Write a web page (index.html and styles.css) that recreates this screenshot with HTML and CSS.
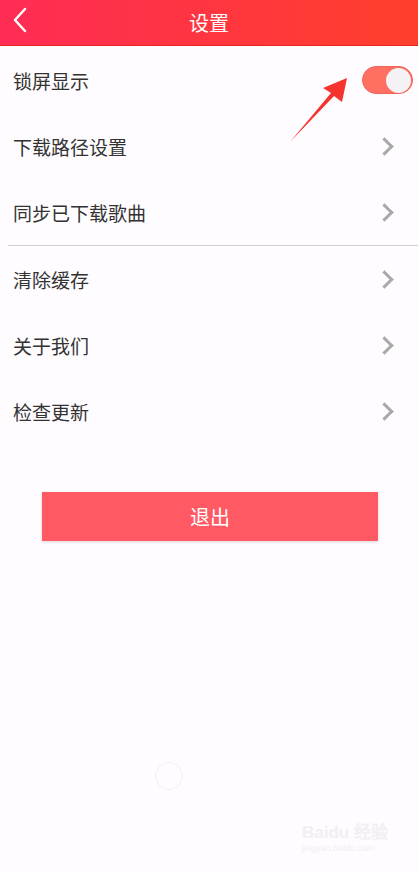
FILE: index.html
```html
<!DOCTYPE html>
<html lang="zh-CN">
<head>
    <meta charset="UTF-8">
    <meta name="viewport" content="width=device-width, initial-scale=1.0">
    <title>设置</title>
    <link rel="stylesheet" href="styles.css">
</head>
<body>
    <header class="topbar">
        <svg class="back" width="16" height="26" viewBox="0 0 16 26">
            <path d="M13 2 L3 13 L13 24" fill="none" stroke="#fff" stroke-width="2.4" stroke-linecap="round" stroke-linejoin="round"/>
        </svg>
        <h1>设置</h1>
    </header>

    <ul class="menu">
        <li class="row">
            <span>锁屏显示</span>
            <span class="switch"><span class="knob"></span></span>
        </li>
        <li class="row"><span>下载路径设置</span><i class="chev"></i></li>
        <li class="row"><span>同步已下载歌曲</span><i class="chev"></i></li>
    </ul>
    <div class="divider"></div>
    <ul class="menu">
        <li class="row"><span>清除缓存</span><i class="chev"></i></li>
        <li class="row"><span>关于我们</span><i class="chev"></i></li>
        <li class="row"><span>检查更新</span><i class="chev"></i></li>
    </ul>

    <button class="logout">退出</button>

    <div class="dot"></div>

    <div class="mark">
        <div class="mark-top">Bai<span class="paw">du</span> 经验</div>
        <div class="mark-url">jingyan.baidu.com</div>
    </div>

    <!-- red annotation arrow -->
    <svg class="arrow" width="418" height="200" viewBox="0 0 418 200">
        <polygon points="290,142 334,96 342,102 347,78 323,88 331,93" fill="#f5332f"/>
    </svg>
</body>
</html>
```

FILE: styles.css
```css
body {
    margin: 0;
    background-color: #fefcfe;
    font-family: "Noto Sans CJK SC", "Noto Sans", sans-serif;
    color: #333;
    position: relative;
    min-height: 871px;
    overflow: hidden;
}
.topbar {
    height: 45px;
    background: linear-gradient(90deg, #ff2c55 0%, #ff3540 50%, #ff3f2c 100%);
    border-bottom: 1px solid #e8241f;
    display: flex;
    align-items: center;
    justify-content: center;
    position: relative;
}
.topbar h1 {
    margin: 0;
    font-size: 20px;
    font-weight: normal;
    color: #fff;
}
.back {
    position: absolute;
    left: 12px;
    top: 7px;
}
.menu {
    list-style: none;
    margin: 0;
    padding: 1px 0 0;
}
.menu + .divider + .menu {
    padding-top: 0;
}
.row {
    height: 66px;
    display: flex;
    align-items: center;
    justify-content: space-between;
    padding: 0 25px 0 13px;
    font-size: 19px;
}
.chev {
    width: 10px;
    height: 10px;
    border-top: 3px solid #a9a9a9;
    border-right: 3px solid #a9a9a9;
    transform: rotate(45deg);
    margin-right: 2px;
}
.switch {
    width: 51px;
    height: 28px;
    border-radius: 14px;
    background-color: #ff7062;
    border: 1px solid #f0655a;
    box-sizing: border-box;
    display: flex;
    align-items: center;
    justify-content: flex-end;
    padding: 1px;
    margin-right: -20px;
}
.knob {
    width: 25px;
    height: 25px;
    border-radius: 50%;
    background-color: #f4f2f4;
}
.divider {
    height: 1px;
    background-color: #d0d0d0;
    margin-left: 8px;
}
.logout {
    display: block;
    margin: 48px 0 0 42px;
    width: 336px;
    height: 49px;
    border: none;
    background-color: #ff5a64;
    color: #fff;
    font-family: "Noto Sans CJK SC", sans-serif;
    font-size: 20px;
    box-shadow: 0 1px 3px rgba(0, 0, 0, 0.15);
}
.dot {
    position: absolute;
    left: 155px;
    top: 762px;
    width: 26px;
    height: 26px;
    border-radius: 50%;
    border: 1px solid #f3eff3;
}
.mark {
    position: absolute;
    left: 302px;
    top: 818px;
    color: #f1eff2;
    font-family: "Liberation Sans", sans-serif;
}
.mark-top {
    font-size: 17px;
    font-weight: bold;
}
.mark-url {
    font-size: 9px;
    margin-top: 0;
}
.arrow {
    position: absolute;
    left: 0;
    top: 0;
}
```
